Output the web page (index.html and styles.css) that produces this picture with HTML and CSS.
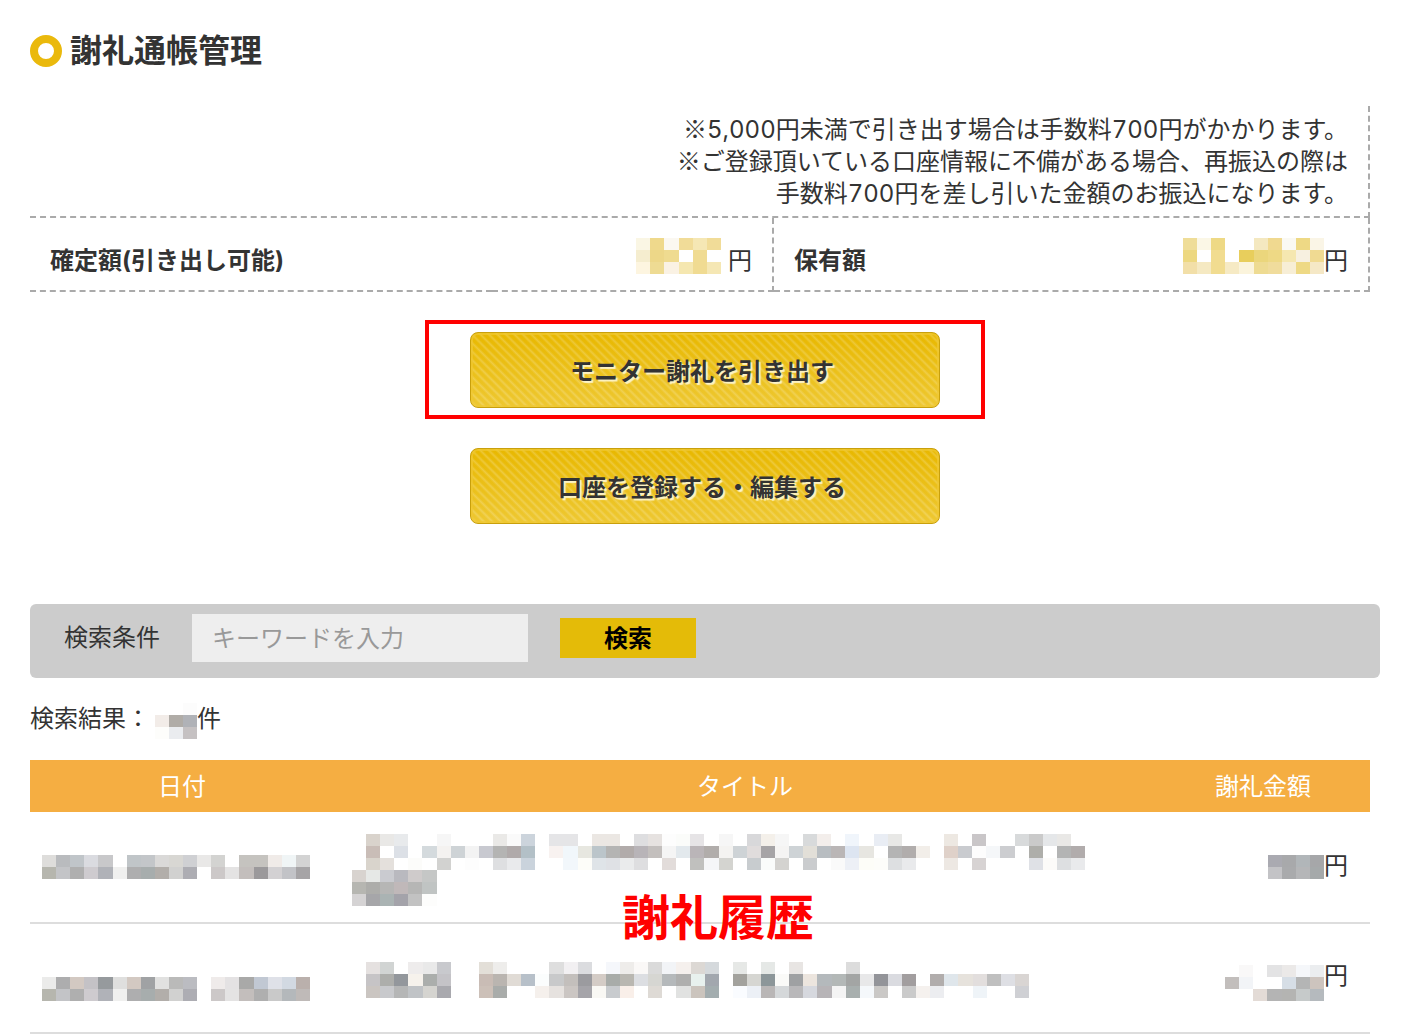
FILE: index.html
```html
<!DOCTYPE html>
<html lang="ja">
<head>
<meta charset="utf-8">
<meta name="viewport" content="width=device-width, initial-scale=1">
<title>謝礼通帳管理</title>
<link rel="stylesheet" href="styles.css">
<script src="mosaic.js" defer></script>
</head>
<body>
<main class="page">
  <h1 class="page-title"><span class="ring"></span>謝礼通帳管理</h1>

  <table class="balance">
    <colgroup><col class="fixed-label"><col class="fixed-value"><col class="held-label"><col></colgroup>
    <tbody>
      <tr>
        <td class="balance-note" colspan="4"><span class="mark">※</span>5,000円未満で引き出す場合は手数料700円がかかります。<br><span class="mark">※</span>ご登録頂いている口座情報に不備がある場合、再振込の際は<br>手数料700円を差し引いた金額のお振込になります。</td>
      </tr>
      <tr>
        <th class="balance-label" scope="row">確定額(引き出し可能)</th>
        <td class="balance-value"><span class="money spaced"><svg class="mosaic" aria-hidden="true" data-columns="faf6e4/f5edcf/fdf5e0 efd98c/edd788/eedb93 fbf8f1/efdb90/faf2e4 f1dc98/-/f5e7b0 f5e7b4/f0db92/f0db92 f1dc98/-/f5e7b4"></svg><span>円</span></span></td>
        <th class="balance-label" scope="row">保有額</th>
        <td class="balance-value"><span class="money"><svg class="mosaic" aria-hidden="true" data-columns="efdd98/edd880/f2dfa8 fbf7e6/-/f5e9c2 eed985/f1dc90/f1dc90 -/-/f6eac4 -/e8ce5c/fbf4dc f4e8c0/ebd67c/eedb92 f0d990/eed985/f0dc9c faf9f3/f5e7b0/f7eed6 eed985/f7f0e0/eed985 faf5e6/f0da92/f5e8c6"></svg><span>円</span></span></td>
      </tr>
    </tbody>
  </table>

  <div class="actions">
    <div class="highlight"><button class="gold-button" type="button">モニター謝礼を引き出す</button></div>
    <button class="gold-button" type="button">口座を登録する・編集する</button>
  </div>

  <form class="search">
    <label for="keyword">検索条件</label>
    <input class="search-input" id="keyword" type="text" placeholder="キーワードを入力">
    <button class="search-button" type="button">検索</button>
  </form>

  <p class="result-count"><span>検索結果：</span><svg class="mosaic" aria-hidden="true" data-columns="-/f2ece8/fdfdfb -/b0aca7/eaecef fcfcfc/b0b2b7/c5c1c2"></svg><span>件</span></p>

  <div class="history">
    <table class="history-table">
      <thead>
        <tr><th class="col-date" scope="col">日付</th><th scope="col">タイトル</th><th class="col-amount" scope="col">謝礼金額</th></tr>
      </thead>
      <tbody>
        <tr>
          <td class="date"><svg class="mosaic" aria-hidden="true" data-columns="dedddb/b6b6ae b9bbbe/c3c4c7 c0c5c9/afafaf dadbe0/cecbcf c8c8ca/b0b2b8 -/f0f0ef c0c5c8/aeaeaf c3c6c9/a7adad dad9d8/b2aeaa d8d7d3/d1d1d0 cfd0d3/adadb3 e9e8e7/- d3d3d1/ccc8c8 -/e4e3e3 c5c3bf/c3bebc c5c3bf/9b999b f0ebe8/d3d1d3 f0f5f6/c2c3c7 d3d3d3/a6a4a6"></svg></td>
          <td class="title"><svg class="mosaic" aria-hidden="true" data-columns="-/-/-/d8d3cf/b6b6b1/d5d3d4 d9d3cc/c9bdb7/d9d4cc/e6e8e6/adadaa/a6a6a9 e9e8e6/-/e4e0dc/cacbd0/b6b6b5/aab3b3 e8eaec/dce0e6/-/b9b9bf/c0b8b9/a4a3aa -/-/fcfcfa/cfcbcb/b6b6b5/c2c2c2 -/d4dadd/-/c5c7c6/c0c4c3/fdfdfc f6f6f6/f4f2f0/d2d2d0 -/ced3d6 -/f3f3f3/fdfdfd -/c8c9d0 eae9e7/b4b4b3/dedfe1 fafafa/b0aaaa/e9eaec ccd4dc/b3c0c7/cad3dc - e5e5e7/f8f2f0 e5e5e7/f1f7fb/f2f7fb -/e7e7e0/fdfdf9 ebe7e3/bbc5ca/dfe4e8 ebe7e3/b4b4b3/dfe1e5 -/b1abaa/eaebec dedee0/b8b4b8/dedee0 e6e2e0/c3bfbd fdfdfd/f5f5f5/e2dcda fbfcfa/e3e9ed e6e4e6/bab5b8/c0c0be -/b1adab/f5f6f8 f6f6f6/f4f3f1/d4d4d0 -/ced3d6 d8d8da/e0dcdc/c8cccf f4f0ea/a6a4a6/fafcfb f6f6f6/f5f4f3/d4d3d0 -/ced3d6 d8dadb/e2dfd8/caccce f3eeeb/b8bdc1 -/bab6b6/fafafa f0f5fb/dde5f1/edf0f6 -/e7e6e1/fdfdf8 e9edf4/-/fdfdfa e8e8e6/b4b4b4/dddfe1 -/b1adac/e9eaec -/f2eee9 - ede8e2/dfd1c9/ede8e3 -/c9cbcf c9c6c8/fdfdfd/d7d3d3 -/f5f7f9 -/cccdd0 d8dadb cacaca/aeaeaa/dfe1e6 e5e7e9/-/fcfbf9 e9e8e6/b3b4b4/dddfe1 -/b1acac/e9eaec"></svg></td>
          <td class="amount"><span class="cost"><svg class="mosaic" aria-hidden="true" data-columns="aaaab1/c3c3c6 a8a9ab/a9aaac b1b6b9/b5b6b8 a6a7a9/a5a9aa"></svg><span>円</span></span></td>
        </tr>
        <tr>
          <td class="date"><svg class="mosaic" aria-hidden="true" data-columns="-/ebebea/b6b6ae -/adadae/c3c4c7 -/d3c9c2/afafaf -/c4c2c6/cecbcf -/969a9d/b0b2b8 -/dfdfde/f0f0ef -/d3c9c2/aeaeaf -/a0a2a4/a7adad -/e1e1e0/b2aeaa -/babab9/d1d1d0 -/bbbcc1/adadb3 - -/efebea/ccc8c8 -/e4e2e3/e4e3e3 -/a9a9a8/c3bebc -/c1c8d3/afafaf -/dfe1e8/c9c9c9 -/d2d9e2/b4b8bb -/bab0ac/bfbab8"></svg></td>
          <td class="title"><svg class="mosaic" aria-hidden="true" data-columns="- e5e1e0/c6c4c6/cac5c1 d1d4d3/adaeab/c8c9cc -/93979c/b5b6b6 eeecec/f6f2ec/c0c3c6 e9e9e9/abaeac/d5d4d0 c8c9cd/c4c3c7/a9a9ae - - e3dfd8/c9bcb5/ccc0b8 eeedeb/bab5b0/a9acaa -/e0dbd5 -/b7c0c9 -/fbfdfd/f5f0ec dedede/c8c9ca/e6e2df f2f0f2/c3bfbc/cbc6c3 dbdcdf/9b9b9f/a5a4a9 -/d4ccc6/f9f8f4 f5f7fb/a8aca9/c8cbce eeecea/b9b7b1/f9efe9 faf8f7/dcdee2 dadada/d6d6d2/dedad5 f2f4f7/b5b9bb f5f0ed/afafae/e1e2e1 dcd8d4/e8f1ee/cbc4bd d5d9dc/a2a7ae/a3adaf - e6e8e6/a3a29d/fafcff -/d6d6d2/ecf0f6 e5e8e6/8c9699/b9b6b6 -/fafaf8/d5d8da e8e5e3/9fa1a3/b9b8ba -/ece5de/d6d8de -/b4b9bc/b7b4b7 -/b3b8b7/f4f4f4 dcdcdc/a3a5a4/a8afae -/e8e8e9/f5f8fb -/939499/cac8c6 -/dadbe0 -/a29e9f/cacaca -/-/f5f1ee -/b1adac/ecedf0 -/dfe6eb -/e6e2dc -/e2dedd/eff4f8 -/bfbfbf -/dedfe4 -/d9d5d3/cfd0d4"></svg></td>
          <td class="amount"><span class="cost"><svg class="mosaic" aria-hidden="true" data-columns="-/c2bebc f9f8f8/f2f4f7 -/-/e3dbd6 e3e3e4/-/b4b4b4 ebe9e8/d6dee6/b4b4b2 f5f7fa/b4b5b5/c6caca ebedef/cdc4be/b5babe"></svg><span>円</span></span></td>
        </tr>
      </tbody>
    </table>
    <strong class="history-note">謝礼履歴</strong>
  </div>
</main>
</body>
</html>
```

FILE: styles.css
```css
* { box-sizing: border-box; }

body {
  margin: 0;
  background: #fff;
  color: #333;
  font: 24px/32px Inter, "Noto Sans CJK JP", sans-serif;
}

button, input { font: inherit; border: 0; }

.page { padding: 27px 40px 0 30px; }

.mosaic { display: block; flex: none; }

/* Heading */
.page-title {
  display: flex;
  align-items: center;
  gap: 8px;
  margin: 0 0 31px;
  font-size: 32px;
  line-height: 48px;
}
.ring {
  width: 32px;
  height: 32px;
  border: 8px solid #eab90c;
  border-radius: 50%;
}

/* Balance */
.balance {
  width: 100%;
  border-spacing: 0;
  table-layout: fixed;
}
.fixed-label { width: 462px; }
.fixed-value { width: 282px; }
.held-label { width: 188px; }
.balance td, .balance th {
  border: 0 dashed #aaa;
  border-bottom-width: 2px;
}
.balance .balance-note {
  padding: 8px 20px 6px;
  border-right-width: 2px;
  font-variant-numeric: tabular-nums;
  text-align: right;
}
.mark { font-family: "Noto Sans CJK JP", sans-serif; line-height: 1; }
.balance-label {
  padding: 20px 0 13px 20px;
  text-align: left;
  vertical-align: bottom;
  white-space: nowrap;
}
.balance .balance-value {
  padding: 20px 20px 13px;
  border-right-width: 2px;
}
.money {
  display: flex;
  justify-content: flex-end;
  align-items: flex-end;
}
.money .mosaic { margin-bottom: 3px; }
.spaced { gap: 7px; }

/* Actions */
.actions {
  display: flex;
  flex-direction: column;
  align-items: center;
  gap: 29px;
  margin: 28px -10px 80px 0;
}
.highlight {
  padding: 8px 41px 7px;
  border: 4px solid #f00;
}
.gold-button {
  display: block;
  width: 470px;
  max-width: 100%;
  height: 76px;
  padding: 3px 6px 0 0;
  border: 1px solid #c9a00c;
  border-radius: 8px;
  background:
    repeating-linear-gradient(45deg, rgba(255, 255, 255, 0) 0 2px, rgba(255, 255, 255, .2) 4px, rgba(255, 255, 255, 0) 6px),
    linear-gradient(#e8b800, #eec832);
  box-shadow: inset 0 0 0 2px rgba(240, 200, 50, .7);
  color: #333;
  font-weight: 700;
  text-shadow: 2px 2px 1px rgba(255, 250, 225, .85);
}

/* Search */
.search {
  display: flex;
  align-items: center;
  gap: 32px;
  margin-right: -10px;
  padding: 10px 34px 16px;
  border-radius: 6px;
  background: #ccc;
}
.search-input {
  width: 336px;
  height: 48px;
  padding: 0 20px;
  background: #eee;
  color: #333;
}
.search-input::placeholder { color: #999; opacity: 1; }
.search-button {
  width: 136px;
  height: 40px;
  padding: 2px 0 0;
  background: #e4bb08;
  color: #000;
  font-weight: 700;
}

.result-count {
  display: flex;
  margin: 25px 0 21px;
}
.result-count .mosaic { margin-left: 5px; }

/* History */
.history { position: relative; }
.history-table {
  width: 100%;
  border-spacing: 0;
  table-layout: fixed;
}
.history-table th {
  height: 54px;
  padding: 2px 0 0;
  border-bottom: 2px solid #fff;
  background: #f5ae42;
  color: #fff;
  font-weight: 400;
}
.col-date { width: 304px; }
.col-amount { width: 214px; }
.history-table td {
  height: 110px;
  border-bottom: 2px solid #ddd;
  vertical-align: top;
}
.date { padding: 41px 12px 0; }
.history-table .title {
  padding: 20px 18px 16px;
  vertical-align: middle;
}
.amount { padding: 36px 22px 0; }
.cost {
  display: flex;
  justify-content: flex-end;
}
.cost .mosaic { margin-top: 5px; }
.history-note {
  position: absolute;
  top: 134px;
  left: 592px;
  color: #f00;
  font-size: 48px;
  line-height: 48px;
}
```

FILE: mosaic.js
```js
// Draws masked values: columns are split by spaces, the cells of a column by slashes.
const CELL_WIDTH = 14.1;
const CELL_HEIGHT = 12;

document.querySelectorAll(".mosaic").forEach((svg) => {
  const columns = svg.dataset.columns.split(" ").map((c) => c.split("/"));
  const rows = Math.max(...columns.map((c) => c.length));
  svg.setAttribute("viewBox", `0 0 ${columns.length} ${rows}`);
  svg.setAttribute("preserveAspectRatio", "none");
  svg.setAttribute("shape-rendering", "crispEdges");
  svg.setAttribute("width", Math.round(columns.length * CELL_WIDTH));
  svg.setAttribute("height", rows * CELL_HEIGHT);
  columns.forEach((cells, x) => cells.forEach((color, y) => {
    if (color === "-") return;
    const rect = document.createElementNS("http://www.w3.org/2000/svg", "rect");
    rect.setAttribute("x", x);
    rect.setAttribute("y", y);
    rect.setAttribute("width", 1);
    rect.setAttribute("height", 1);
    rect.setAttribute("fill", `#${color}`);
    svg.append(rect);
  }));
});
```
